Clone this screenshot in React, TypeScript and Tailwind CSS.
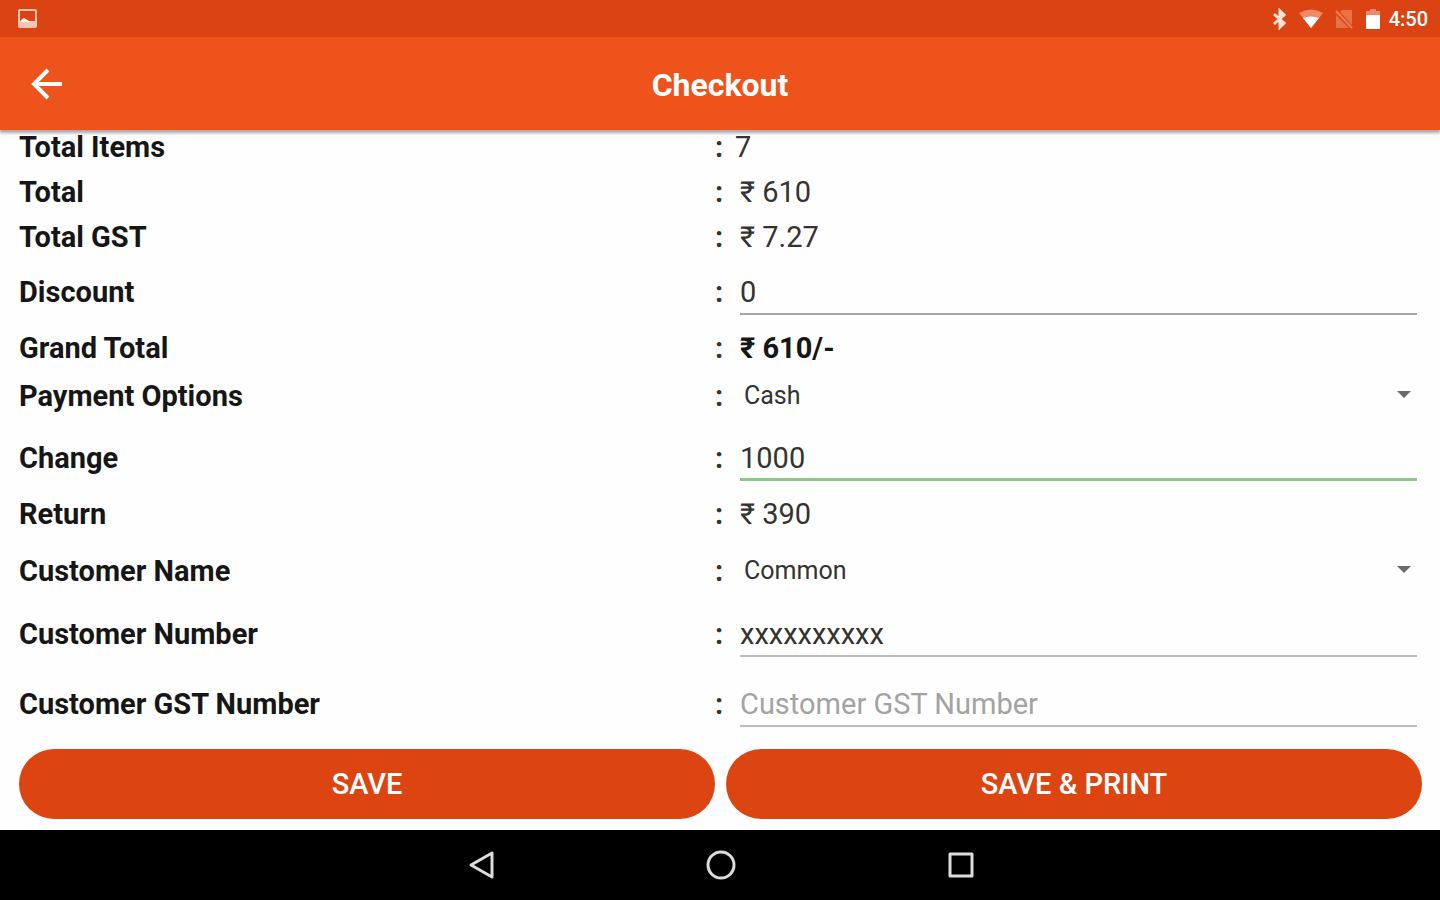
import { useState } from "react";
import type { ReactNode } from "react";

const StatusBar = () => {
  return (
    <div className="flex h-[37px] items-center justify-between bg-[#db4412] pl-[18px] pr-3 text-white">
      <svg width="19" height="19" viewBox="0 0 19 19" aria-hidden="true">
        <rect x="1" y="1" width="17" height="17" rx="1" fill="none" stroke="#f9c5b0" strokeWidth="2" />
        <path d="M2 12l4-2 4 3 3-1h4v5H2z" fill="#f9c5b0" />
        <path d="M3 13V11l3-2 5 3 4 1z" fill="#fff" />
      </svg>
      <div className="flex items-center">
        <svg className="mr-3" width="14" height="22" viewBox="0 0 14 22" fill="none" stroke="#fde3d8" strokeWidth="3" aria-hidden="true">
          <path d="M1 6l10 9-4 4V3l4 4L1 16" />
        </svg>
        <svg className="mr-3" width="24" height="20" viewBox="0 0 24 20" aria-hidden="true">
          <path d="M0 4Q12-3 24 4L12 19z" fill="#f08a66" />
          <path d="M4 9Q12 6 20 9L12 19z" fill="#fff" />
        </svg>
        <svg className="mr-3" width="18" height="20" viewBox="0 0 18 20" aria-hidden="true">
          <path d="M7 1h10v15L5 3zM1 6l13 13H1z" fill="#ea7046" />
          <path d="M1 2l16 17" stroke="#ee7d57" strokeWidth="2" />
        </svg>
        <svg className="mr-2" width="16" height="22" viewBox="0 0 16 22" aria-hidden="true">
          <path d="M5 1h6v2h4v4H1V3h4z" fill="#f08a66" />
          <path d="M1 7h14v13a1 1 0 0 1-1 1H2a1 1 0 0 1-1-1z" fill="#fff" />
        </svg>
        <span className="text-[20px] leading-6 font-medium">4:50</span>
      </div>
    </div>
  );
};

const Header = () => {
  return (
    <header className="z-10 grid h-[93px] grid-cols-[1fr_auto_1fr] items-center bg-[#ee531c] px-7 text-white shadow-[0_3px_3px_rgba(0,0,0,0.35)]">
      <button type="button" aria-label="Back" className="w-9">
        <svg width="38" height="38" viewBox="0 0 38 38" fill="none" stroke="#fff" strokeWidth="4" aria-hidden="true">
          <path d="M34 19H6M20 5L6 19l14 14" />
        </svg>
      </button>
      <h1 className="pt-0.5 text-[32px] leading-10 font-bold">Checkout</h1>
    </header>
  );
};

type RowProps = {
  label: string;
  height: string;
  htmlFor?: string;
  tight?: boolean;
  children: ReactNode;
};

const Row = ({ label, height, htmlFor, tight, children }: RowProps) => {
  return (
    <div className={`grid grid-cols-[99fr_101fr] items-center ${height}`}>
      {htmlFor ? (
        <label htmlFor={htmlFor} className="font-bold text-[#161616]">
          {label}
        </label>
      ) : (
        <span className="font-bold text-[#161616]">{label}</span>
      )}
      <div className="flex items-center">
        <span className={`shrink-0 pl-1 font-bold ${tight ? "w-6" : "w-[29px]"}`}>:</span>
        {children}
      </div>
    </div>
  );
};

type FieldProps = {
  id: string;
  initial?: string;
  placeholder?: string;
  line: string;
};

const Field = ({ id, initial = "", placeholder, line }: FieldProps) => {
  const [value, setValue] = useState(initial);
  return (
    <input
      id={id}
      type="text"
      value={value}
      placeholder={placeholder}
      onChange={(e) => setValue(e.target.value)}
      className={`h-[46px] w-full min-w-0 bg-transparent pt-0.5 outline-none placeholder:text-[#a3a3a3] ${line}`}
    />
  );
};

const Dropdown = ({ id, option }: { id: string; option: string }) => {
  return (
    <div className="relative w-full">
      <select id={id} className="h-10 w-full appearance-none bg-transparent pl-1 text-[25px] outline-none">
        <option>{option}</option>
      </select>
      <svg className="pointer-events-none absolute top-[15px] right-1.5" width="14" height="7" viewBox="0 0 14 7" aria-hidden="true">
        <path d="M0 0h14L7 7z" fill="#6b6b6b" />
      </svg>
    </div>
  );
};

const NavBar = () => {
  return (
    <nav className="flex h-[70px] items-center justify-center gap-[204px] bg-black pl-0.5">
      <button type="button" aria-label="Back">
        <svg width="36" height="36" viewBox="0 0 36 36" fill="none" stroke="#dcdcdc" strokeWidth="3" strokeLinejoin="round" aria-hidden="true">
          <path d="M29 6v24L8 18z" />
        </svg>
      </button>
      <button type="button" aria-label="Home">
        <svg width="36" height="36" viewBox="0 0 36 36" fill="none" stroke="#dcdcdc" strokeWidth="3" aria-hidden="true">
          <circle cx="18" cy="18" r="13" />
        </svg>
      </button>
      <button type="button" aria-label="Recent apps">
        <svg width="36" height="36" viewBox="0 0 36 36" fill="none" stroke="#dcdcdc" strokeWidth="3" strokeLinejoin="round" aria-hidden="true">
          <rect x="7" y="7" width="22" height="22" />
        </svg>
      </button>
    </nav>
  );
};

export default function App() {
  return (
    <div className="flex min-h-screen flex-col bg-[#fefefe] font-['Roboto',sans-serif] text-[29px] leading-[34px] text-[#333]">
      <StatusBar />
      <Header />
      <main className="flex-1">
        <form className="pb-[11px]" onSubmit={(e) => e.preventDefault()}>
          <div className="pr-[23px] pl-[19px]">
            <Row label="Total Items" height="h-[34px]" tight>
              <span>7</span>
            </Row>
            <Row label="Total" height="h-14">
              <span>₹ 610</span>
            </Row>
            <Row label="Total GST" height="h-[34px]">
              <span>₹ 7.27</span>
            </Row>
            <Row label="Discount" height="h-[76px]" htmlFor="discount">
              <Field id="discount" initial="0" line="border-b-2 border-[#a6a6a6]" />
            </Row>
            <Row label="Grand Total" height="h-9">
              <span className="font-bold text-[#161616]">₹ 610/-</span>
            </Row>
            <Row label="Payment Options" height="h-[60px]" htmlFor="payment">
              <Dropdown id="payment" option="Cash" />
            </Row>
            <Row label="Change" height="h-16" htmlFor="change">
              <Field id="change" initial="1000" line="border-b-3 border-[#8cc88a]" />
            </Row>
            <Row label="Return" height="h-12">
              <span>₹ 390</span>
            </Row>
            <Row label="Customer Name" height="h-[66px]" htmlFor="customer">
              <Dropdown id="customer" option="Common" />
            </Row>
            <Row label="Customer Number" height="h-[60px]" htmlFor="number">
              <Field id="number" initial="xxxxxxxxxx" line="border-b-2 border-[#bdbdbd]" />
            </Row>
            <Row label="Customer GST Number" height="h-20" htmlFor="gst">
              <Field id="gst" placeholder="Customer GST Number" line="border-b-2 border-[#bdbdbd]" />
            </Row>
          </div>
          <div className="mt-[5px] grid grid-cols-2 gap-[11px] pr-[18px] pl-[19px] font-medium text-white">
            <button type="submit" className="h-[70px] rounded-full bg-[#dc4512]">
              SAVE
            </button>
            <button type="button" className="h-[70px] rounded-full bg-[#dc4512]">
              SAVE &amp; PRINT
            </button>
          </div>
        </form>
      </main>
      <NavBar />
    </div>
  );
}
